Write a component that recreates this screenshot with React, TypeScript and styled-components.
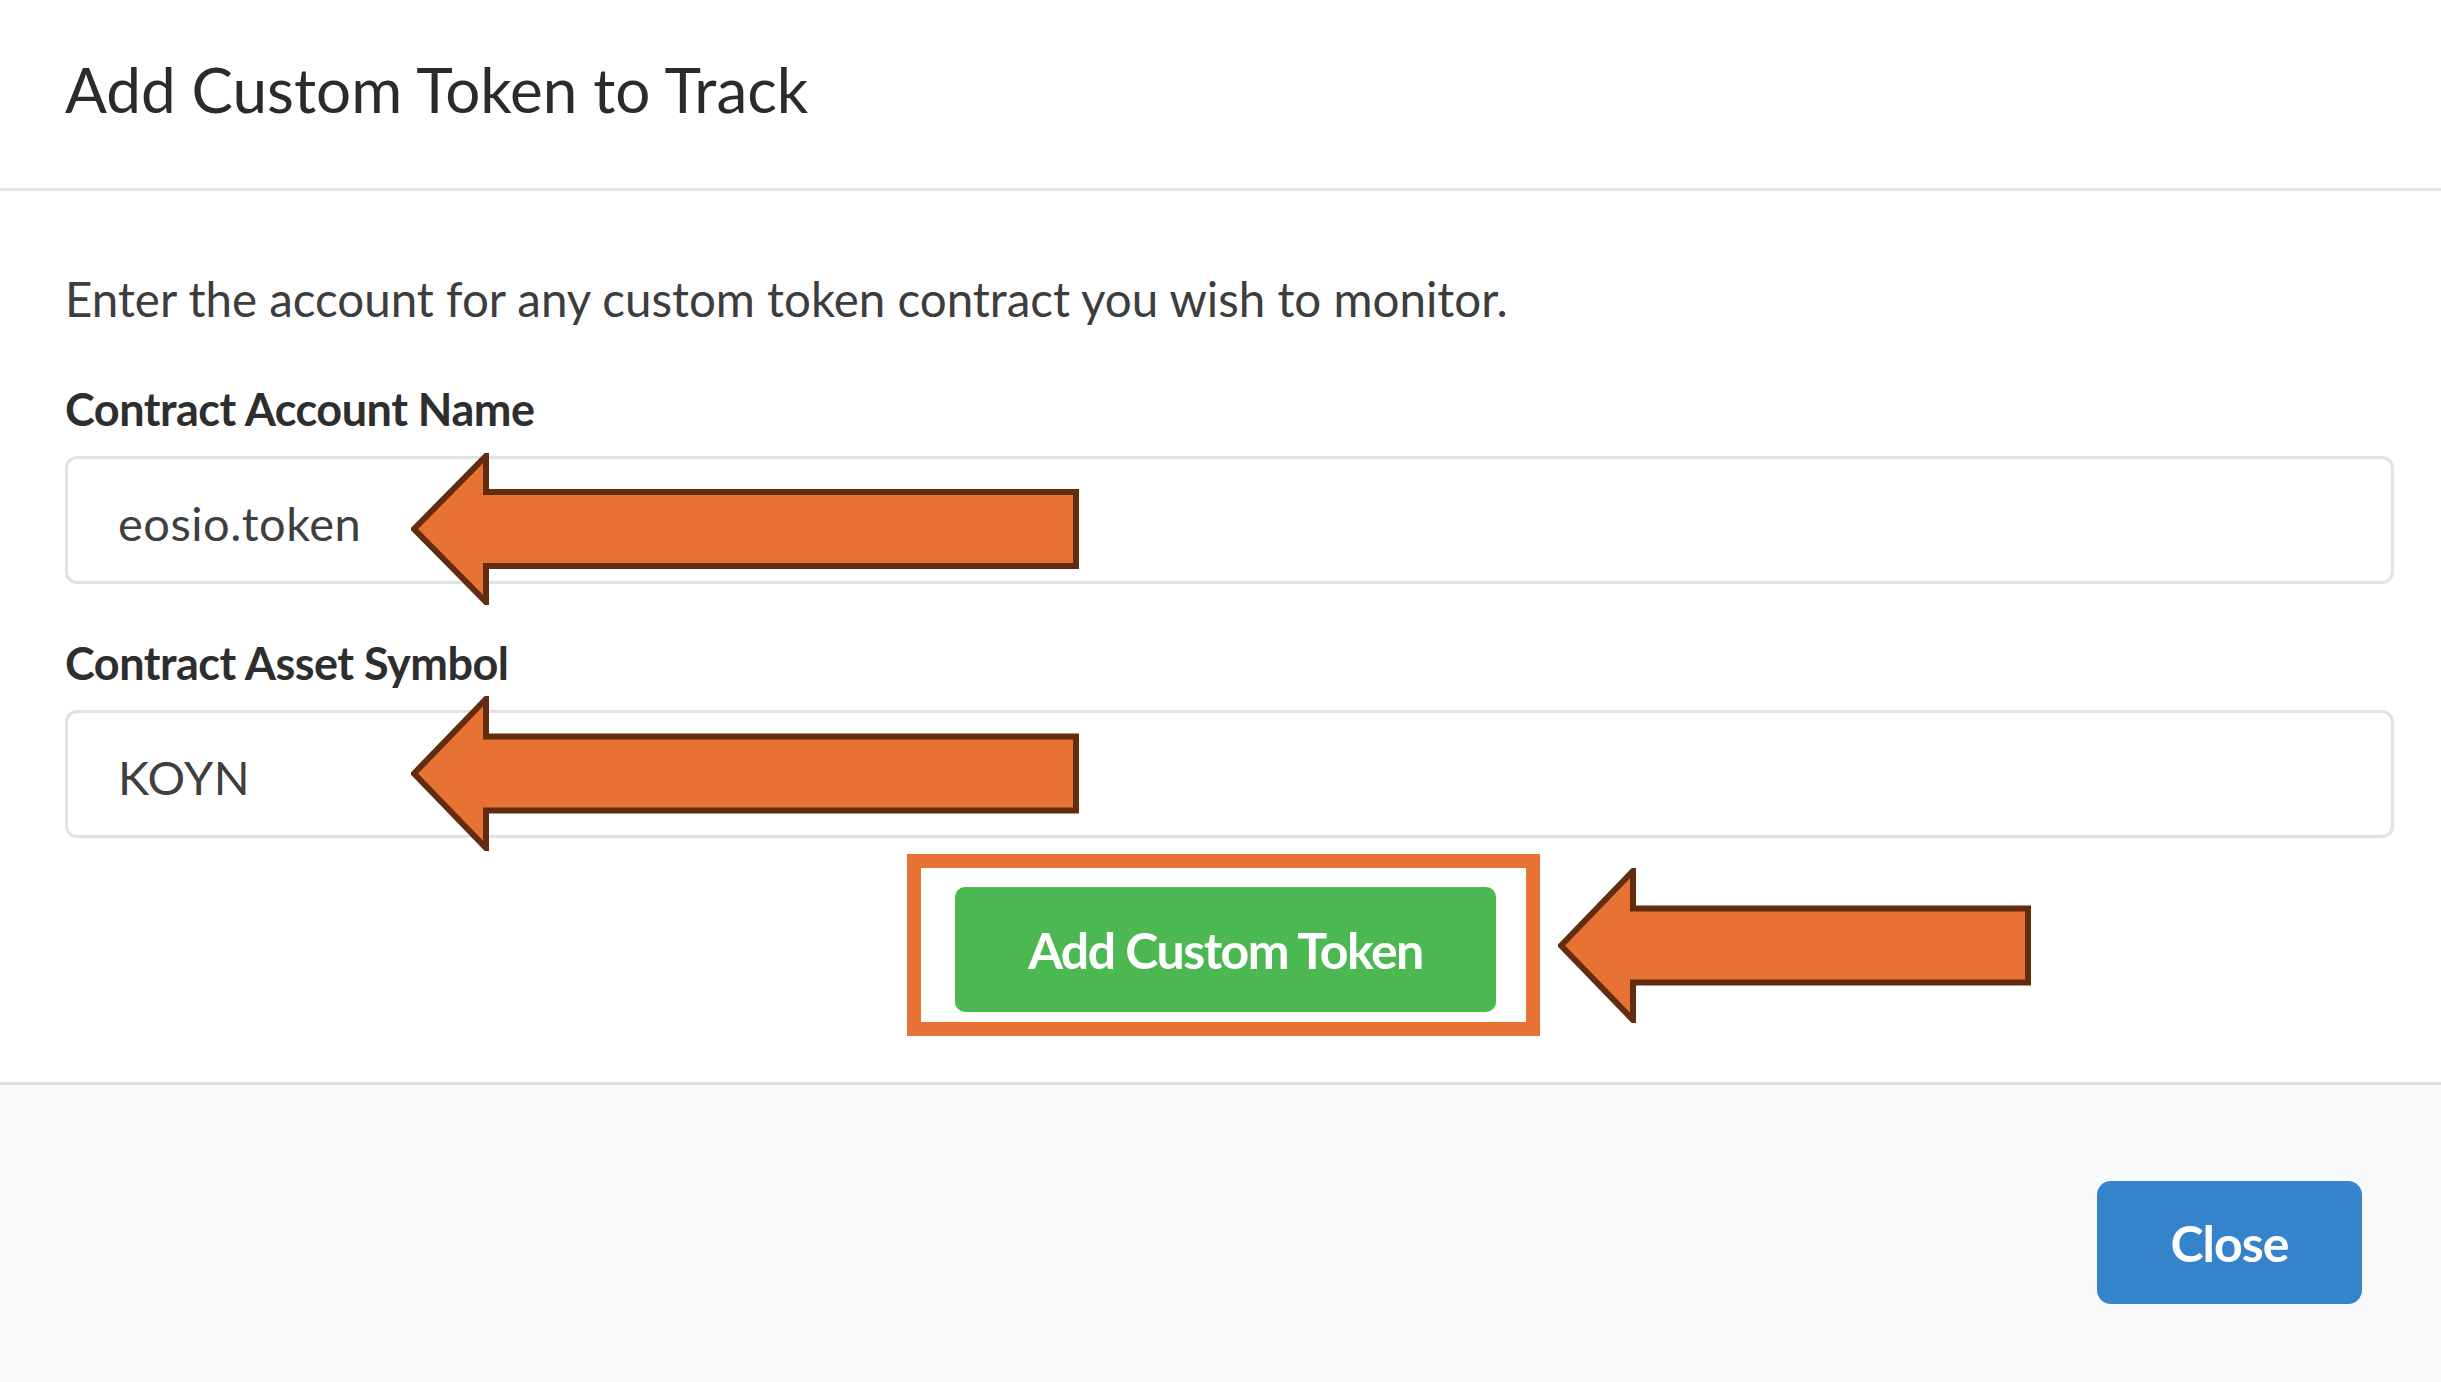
import React from "react";
import styled, { createGlobalStyle } from "styled-components";

const GlobalStyle = createGlobalStyle`
  html, body {
    margin: 0;
    padding: 0;
    background: #ffffff;
  }
  body {
    font-family: Lato, "Open Sans", sans-serif;
    width: 2441px;
    height: 1382px;
    overflow: hidden;
  }
  * {
    box-sizing: border-box;
  }
`;

// arrow used for the orange annotations
const Arrow: React.FC<{ width: number; height?: number }> = ({ width, height = 155 }) => {
  const mid = height / 2;
  const head = 75;
  const half = 37;
  const points = [
    `3,${mid}`,
    `${head},3`,
    `${head},${mid - half}`,
    `${width - 3},${mid - half}`,
    `${width - 3},${mid + half}`,
    `${head},${mid + half}`,
    `${head},${height - 3}`,
  ].join(" ");
  return (
    <svg width={width} height={height} viewBox={`0 0 ${width} ${height}`}>
      <polygon points={points} fill="#e87233" stroke="#622c0f" strokeWidth={6} strokeLinejoin="miter" />
    </svg>
  );
};

const App: React.FC = () => {
  return (
    <Modal>
      <GlobalStyle />
      <Header>
        <Title>Add Custom Token to Track</Title>
      </Header>

      <Body>
        <Description>Enter the account for any custom token contract you wish to monitor.</Description>

        <Label>Contract Account Name</Label>
        <Field gap={52}>
          <Input defaultValue="eosio.token" readOnly />
          <FieldArrow offset={-3}>
            <Arrow width={668} height={152} />
          </FieldArrow>
        </Field>

        <Label>Contract Asset Symbol</Label>
        <Field gap={16}>
          <Input defaultValue="KOYN" readOnly />
          <FieldArrow offset={-14}>
            <Arrow width={668} />
          </FieldArrow>
        </Field>

        <ActionRow>
          <Highlight>
            <AddButton>Add Custom Token</AddButton>
          </Highlight>
          <SideArrow>
            <Arrow width={473} />
          </SideArrow>
        </ActionRow>
      </Body>

      <Footer>
        <CloseButton>Close</CloseButton>
      </Footer>
    </Modal>
  );
};

// =================================
//         STYLED COMPONENTS
// =================================

const Modal = styled.div`
  width: 2441px;
  height: 1382px;
  display: flex;
  flex-direction: column;
  background: #ffffff;
  font-family: Lato, "Open Sans", sans-serif;
`;

const Header = styled.div`
  height: 191px;
  padding: 52px 65px 0;
  border-bottom: 3px solid #e3e3e3;
`;

const Title = styled.h1`
  margin: 0;
  font-size: 62px;
  line-height: 1.2;
  font-weight: 400;
  color: #2b2b2b;
`;

const Body = styled.div`
  padding: 79px 47px 46px 65px;
  display: flex;
  flex-direction: column;
`;

const Description = styled.p`
  margin: 0 0 55px;
  font-size: 47.5px;
  line-height: 1.2;
  color: #3d3d3d;
`;

const Label = styled.label`
  display: block;
  margin-bottom: 20px;
  font-size: 45px;
  line-height: 1.2;
  font-weight: 700;
  color: #2e2e2e;
  letter-spacing: -0.5px;
`;

const Field = styled.div<{ gap: number }>`
  position: relative;
  margin-bottom: ${(props) => props.gap}px;
`;

const Input = styled.input`
  display: block;
  width: 100%;
  height: 128px;
  padding: 6px 50px 0;
  border: 3px solid #e2e2e2;
  border-radius: 12px;
  background: #ffffff;
  font-family: Lato, "Open Sans", sans-serif;
  font-size: 47px;
  letter-spacing: 0.5px;
  color: #3f3f3f;
  outline: none;
`;

const FieldArrow = styled.div<{ offset: number }>`
  position: absolute;
  left: 346px;
  top: ${(props) => props.offset}px;
  line-height: 0;
  pointer-events: none;
`;

const ActionRow = styled.div`
  display: grid;
  grid-template-columns: 1fr auto 1fr;
  align-items: center;
  padding-right: 12px;
`;

const Highlight = styled.div`
  grid-column: 2;
  border: 14px solid #e87233;
  padding: 19px 30px 10px 34px;
  background: #ffffff;
`;

const AddButton = styled.button`
  display: block;
  width: 541px;
  height: 125px;
  border: none;
  border-radius: 10px;
  background: #4cb852;
  color: #ffffff;
  font-family: Lato, "Open Sans", sans-serif;
  font-size: 50px;
  font-weight: 700;
  letter-spacing: -1.5px;
  cursor: pointer;
`;

const SideArrow = styled.div`
  grid-column: 3;
  margin-left: 18px;
  line-height: 0;
`;

const Footer = styled.div`
  flex: 1;
  display: flex;
  justify-content: flex-end;
  align-items: flex-start;
  padding: 96px 79px 0;
  border-top: 3px solid #e0e0e0;
  background: #f8f9fb;
`;

const CloseButton = styled.button`
  width: 265px;
  height: 123px;
  border: none;
  border-radius: 14px;
  background: #3583cb;
  color: #ffffff;
  font-family: Lato, "Open Sans", sans-serif;
  font-size: 50px;
  font-weight: 700;
  letter-spacing: -1px;
  cursor: pointer;
`;

export default App;
